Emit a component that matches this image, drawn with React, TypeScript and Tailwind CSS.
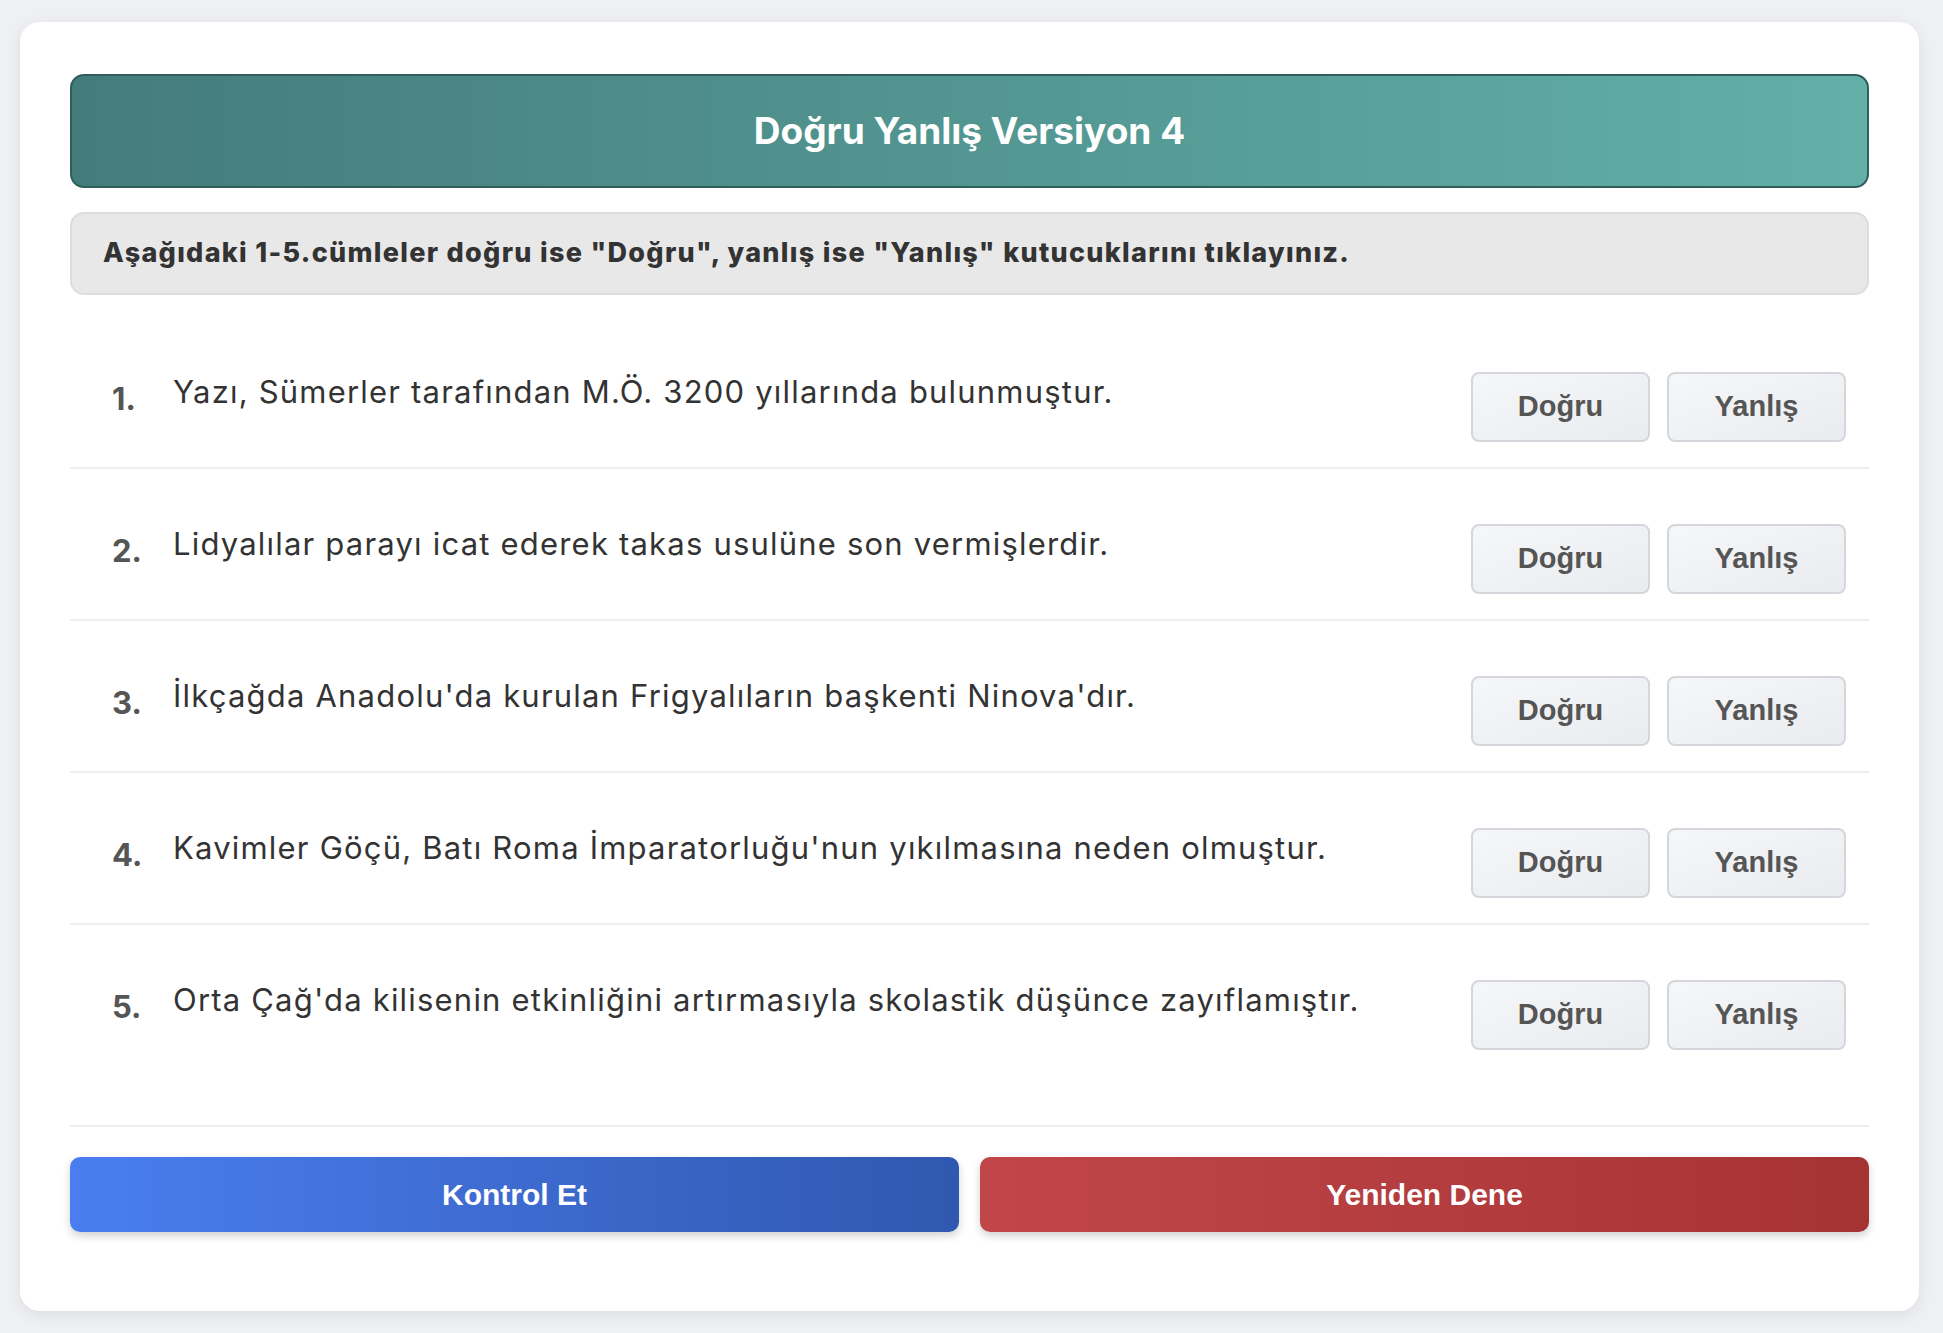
import { useState } from "react";

type Answer = "dogru" | "yanlis" | null;

const STATEMENTS = [
  "Yazı, Sümerler tarafından M.Ö. 3200 yıllarında bulunmuştur.",
  "Lidyalılar parayı icat ederek takas usulüne son vermişlerdir.",
  "İlkçağda Anadolu'da kurulan Frigyalıların başkenti Ninova'dır.",
  "Kavimler Göçü, Batı Roma İmparatorluğu'nun yıkılmasına neden olmuştur.",
  "Orta Çağ'da kilisenin etkinliğini artırmasıyla skolastik düşünce zayıflamıştır.",
];

type ChoiceButtonProps = {
  label: string;
  active: boolean;
  onClick: () => void;
};

function ChoiceButton({ label, active, onClick }: ChoiceButtonProps) {
  return (
    <button
      type="button"
      onClick={onClick}
      className={`h-[70px] w-[179px] rounded-[8px] border-2 font-['Liberation_Sans',Arial,sans-serif] text-[29px] font-bold ${
        active
          ? "border-[#9aa3b0] bg-[#dde1e7] text-[#333]"
          : "border-[#d3d6db] bg-gradient-to-br from-[#f6f7f9] to-[#e9ebee] text-[#555]"
      }`}
    >
      {label}
    </button>
  );
}

type StatementRowProps = {
  index: number;
  text: string;
  answer: Answer;
  last: boolean;
  onAnswer: (value: Answer) => void;
};

function StatementRow({ index, text, answer, last, onAnswer }: StatementRowProps) {
  return (
    <li
      className={`flex items-start justify-between pb-[25px] pl-[42px] pr-[23px] pt-[55px] ${
        last ? "" : "border-b-2 border-[#eeeeee]"
      }`}
    >
      <div className="flex items-start">
        <span className="mt-[4px] w-[61px] text-[31px] font-bold leading-[45px] text-[#555]">
          {index + 1}.
        </span>
        <span className="-mt-[3px] text-[31px] leading-[45px] tracking-[1.2px] text-[#333]">{text}</span>
      </div>
      <div className="flex gap-[17px]">
        <ChoiceButton label="Doğru" active={answer === "dogru"} onClick={() => onAnswer("dogru")} />
        <ChoiceButton label="Yanlış" active={answer === "yanlis"} onClick={() => onAnswer("yanlis")} />
      </div>
    </li>
  );
}

export default function App() {
  const [answers, setAnswers] = useState<Answer[]>(STATEMENTS.map(() => null));

  const setAnswer = (i: number, value: Answer) =>
    setAnswers((prev) => prev.map((a, idx) => (idx === i ? value : a)));

  return (
    <div className="min-h-[1333px] bg-[#eff0f4] pl-[20px] pt-[22px] font-['Inter',sans-serif]">
      <div className="w-[1899px] rounded-[20px] bg-white px-[50px] pb-[79px] pt-[52px] shadow-[0_4px_16px_rgba(0,0,0,0.08)]">
        <header className="flex h-[114px] items-center justify-center rounded-[14px] border-2 border-[#2f5e5b] bg-gradient-to-r from-[#447c7b] to-[#62b0a8]">
          <h1 className="text-[37px] font-bold text-white">Doğru Yanlış Versiyon 4</h1>
        </header>

        <div className="mt-[24px] flex h-[83px] items-center rounded-[14px] border-2 border-[#dddddd] bg-[#e8e8e8] pl-[31px]">
          <p className="text-[27px] font-extrabold tracking-[1.3px] text-[#333]">
            Aşağıdaki 1-5.cümleler doğru ise "Doğru", yanlış ise "Yanlış" kutucuklarını tıklayınız.
          </p>
        </div>

        <ul className="mt-[22px]">
          {STATEMENTS.map((text, i) => (
            <StatementRow
              key={i}
              index={i}
              text={text}
              answer={answers[i]}
              last={i === STATEMENTS.length - 1}
              onAnswer={(value) => setAnswer(i, value)}
            />
          ))}
        </ul>

        <div className="mt-[50px] flex gap-[21px] border-t-2 border-[#eeeeee] pt-[30px]">
          <button
            type="button"
            className="h-[75px] flex-1 rounded-[10px] bg-gradient-to-r from-[#4a7ef0] to-[#3158b0] font-['Liberation_Sans',Arial,sans-serif] text-[30px] font-bold text-white shadow-[0_4px_8px_rgba(0,0,0,0.18)]"
          >
            Kontrol Et
          </button>
          <button
            type="button"
            onClick={() => setAnswers(STATEMENTS.map(() => null))}
            className="h-[75px] flex-1 rounded-[10px] bg-gradient-to-r from-[#c1464a] to-[#a63334] font-['Liberation_Sans',Arial,sans-serif] text-[30px] font-bold text-white shadow-[0_4px_8px_rgba(0,0,0,0.18)]"
          >
            Yeniden Dene
          </button>
        </div>
      </div>
    </div>
  );
}
